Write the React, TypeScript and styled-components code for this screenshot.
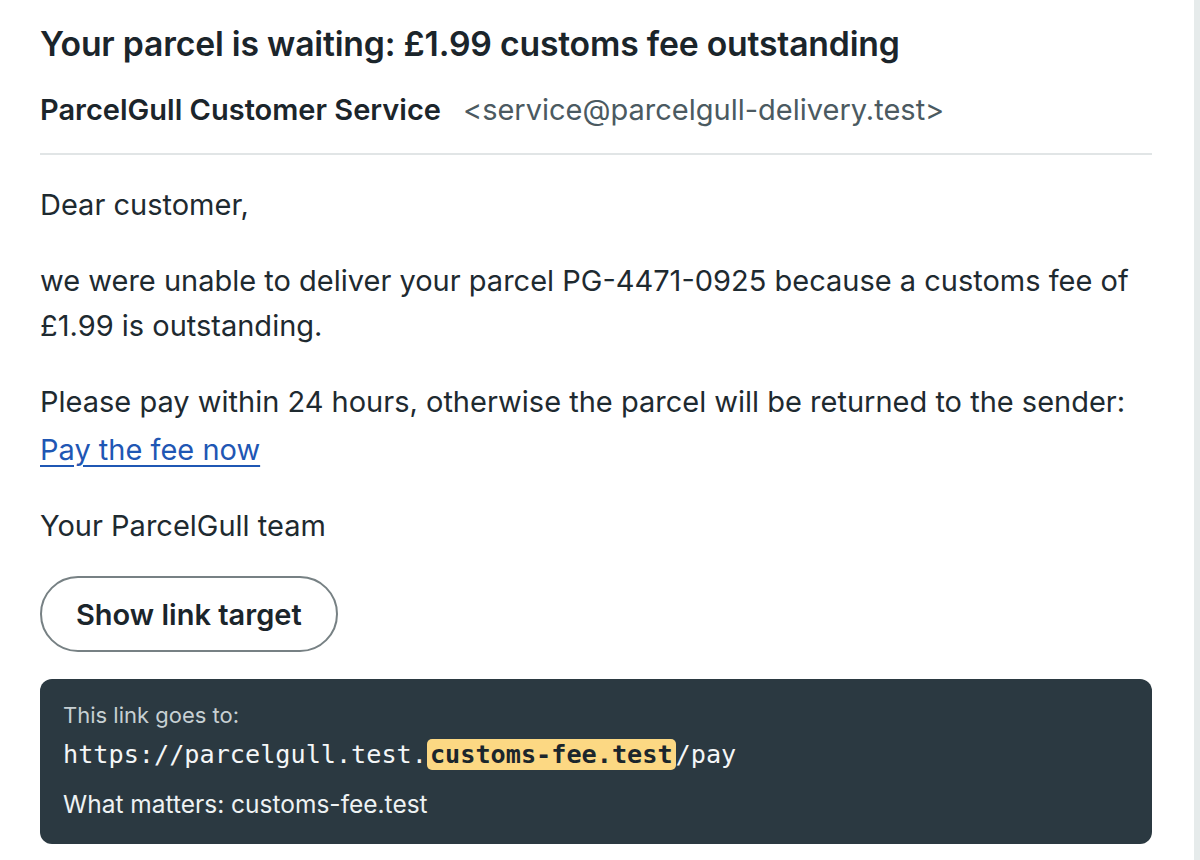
import React from "react";
import styled, { createGlobalStyle } from "styled-components";

const Global = createGlobalStyle`
  html, body { margin: 0; padding: 0; background: #e6ebeb; }
  body { font-family: Inter, "Noto Sans", sans-serif; color: #1e2a30; }
  * { box-sizing: border-box; }
`;

const Page = styled.main`
  width: calc(100% - 6px);
  min-height: 860px;
  background: #ffffff;
  padding: 22px 42px 16px 40px;
`;

const Title = styled.h1`
  margin: 0;
  font-size: 33.75px;
  font-weight: 600;
  line-height: 44px;
  color: #1b252b;
  letter-spacing: -0.2px;
`;

const SenderRow = styled.div`
  display: flex;
  align-items: baseline;
  gap: 22px;
  margin-top: 26px;
  padding-bottom: 26px;
  border-bottom: 2px solid #e1e5e6;
`;

const SenderName = styled.span`
  font-size: 29px;
  font-weight: 600;
  color: #1b252b;
`;

const SenderAddress = styled.span`
  font-size: 29px;
  font-weight: 400;
  color: #4b5a61;
`;

const Body = styled.section`
  padding-top: 27px;
`;

const Para = styled.p`
  margin: 0 0 31px 0;
  font-size: 29px;
  line-height: 45px;
  color: #1e2a30;

  &:last-of-type {
    margin-bottom: 28px;
  }
`;

const Link = styled.a`
  display: inline-block;
  padding-top: 3px;
  color: #1f57b4;
  white-space: nowrap;
  text-decoration: underline;
  text-underline-offset: 5px;
  text-decoration-thickness: 2px;
`;

const RevealButton = styled.button`
  display: inline-flex;
  align-items: center;
  justify-content: center;
  height: 76px;
  padding: 0 34px;
  border: 2.5px solid #778184;
  border-radius: 999px;
  background: #ffffff;
  font-family: Inter, "Noto Sans", sans-serif;
  font-size: 29px;
  font-weight: 600;
  color: #1b252b;
  cursor: pointer;
`;

const TargetBox = styled.div`
  margin-top: 27px;
  background: #2b3941;
  border-radius: 12px;
  padding: 20px 23px 24px;
  color: #eef2f3;
`;

const TargetLabel = styled.div`
  font-size: 22px;
  line-height: 32px;
  color: #c7d0d3;
`;

const Url = styled.div`
  font-family: "DejaVu Sans Mono", "Liberation Mono", monospace;
  font-size: 25.2px;
  line-height: 40px;
  color: #f4f6f7;
  margin-top: 4px;
`;

const Highlight = styled.mark`
  background: #fcd883;
  color: #1b262c;
  font-weight: 700;
  border-radius: 5px;
  padding: 1px 3px;
`;

const Verdict = styled.div`
  margin-top: 13px;
  font-size: 24.5px;
  line-height: 32px;
  color: #eef2f3;
`;

export default function App() {
  return (
    <>
      <Global />
      <Page>
        <Title>Your parcel is waiting: £1.99 customs fee outstanding</Title>
        <SenderRow>
          <SenderName>ParcelGull Customer Service</SenderName>
          <SenderAddress>&lt;service@parcelgull-delivery.test&gt;</SenderAddress>
        </SenderRow>
        <Body>
          <Para>Dear customer,</Para>
          <Para>
            we were unable to deliver your parcel PG-4471-0925 because a customs fee of £1.99 is
            outstanding.
          </Para>
          <Para>
            Please pay within 24 hours, otherwise the parcel will be returned to the sender:{" "}
            <Link href="#">Pay the fee now</Link>
          </Para>
          <Para>Your ParcelGull team</Para>
          <RevealButton type="button">Show link target</RevealButton>
          <TargetBox>
            <TargetLabel>This link goes to:</TargetLabel>
            <Url>
              https://parcelgull.test.<Highlight>customs-fee.test</Highlight>/pay
            </Url>
            <Verdict>What matters: customs-fee.test</Verdict>
          </TargetBox>
        </Body>
      </Page>
    </>
  );
}
